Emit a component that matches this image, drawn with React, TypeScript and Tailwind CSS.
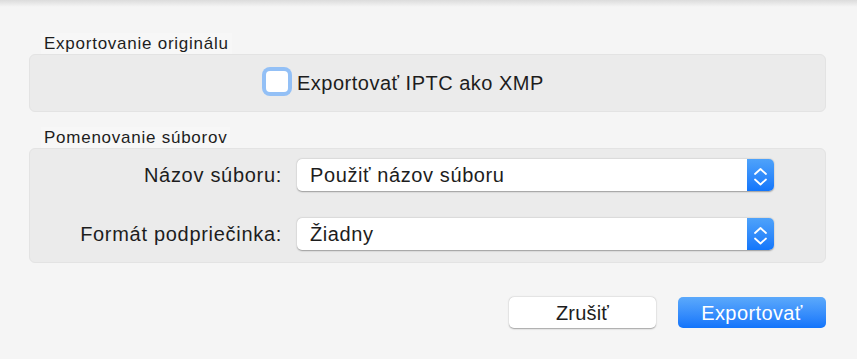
import React from "react";

function Stepper() {
  return (
    <div className="w-[27px] h-full rounded-r-[5px] bg-gradient-to-b from-[#4ea2fa] to-[#1276fb] flex items-center justify-center">
      <svg width="27" height="31" viewBox="0 0 27 31" fill="none">
        <polyline points="8,14 13.5,9 19,14" stroke="white" strokeWidth="1.8" strokeLinecap="round" strokeLinejoin="round" />
        <polyline points="8,19.5 13.5,24.5 19,19.5" stroke="white" strokeWidth="1.8" strokeLinecap="round" strokeLinejoin="round" />
      </svg>
    </div>
  );
}

function Popup({ value }: { value: string }) {
  return (
    <div className="w-[477px] h-[32px] flex rounded-[5px] bg-white shadow-[0_0.5px_1.5px_rgba(0,0,0,0.35)]">
      <div className="flex-1 pl-[13px] flex items-center text-[20px] tracking-[0.6px] text-[#1d1d1d]">{value}</div>
      <Stepper />
    </div>
  );
}

export default function App() {
  return (
    <div className="w-[857px] h-[359px] bg-[#f5f5f5] font-['Liberation_Sans',Arial,sans-serif] text-[#1d1d1d] overflow-hidden">
      <div className="h-[7px] bg-gradient-to-b from-[#dcdcdc] to-[#f5f5f5]" />
      <div className="pl-[29px] pr-[31px] pt-[26px]">
        <div className="ml-[12px] w-fit h-[21px] leading-[21px] text-[17px] tracking-[0.75px] px-[3px] bg-[#f7f7f7]">
          Exportovanie originálu
        </div>
        <div className="h-[58px] rounded-[6px] bg-[#ebebeb] border border-[#e3e3e3] flex items-center pl-[232px]">
          <div className="w-[30px] h-[29px] rounded-[8px] bg-[#93c0f6] p-[4px] mt-[-3px]">
            <div className="w-full h-full rounded-[4px] bg-white" />
          </div>
          <div className="ml-[5px] text-[20px] tracking-[0.5px]">Exportovať IPTC ako XMP</div>
        </div>
        <div className="mt-[15px] ml-[12px] w-fit h-[21px] leading-[21px] text-[17px] tracking-[0.75px] px-[3px] bg-[#f7f7f7]">
          Pomenovanie súborov
        </div>
        <div className="rounded-[6px] bg-[#ebebeb] border border-[#e3e3e3] pt-[10px] pb-[12px] flex flex-col gap-[27px]">
          <div className="flex items-center">
            <div className="w-[252px] text-right text-[20px] tracking-[0.7px]">Názov súboru:</div>
            <div className="ml-[15px]">
              <Popup value="Použiť názov súboru" />
            </div>
          </div>
          <div className="flex items-center">
            <div className="w-[252px] text-right text-[20px] tracking-[0.7px]">Formát podpriečinka:</div>
            <div className="ml-[15px]">
              <Popup value="Žiadny" />
            </div>
          </div>
        </div>
        <div className="mt-[34px] flex justify-end gap-[22px]">
          <div className="w-[147px] h-[31px] rounded-[5px] bg-white shadow-[0_0.5px_1.5px_rgba(0,0,0,0.35)] flex items-center justify-center text-[20px] tracking-[0.2px]">
            Zrušiť
          </div>
          <div className="w-[148px] h-[31px] rounded-[5px] bg-gradient-to-b from-[#5ba9fb] to-[#1174fb] flex items-center justify-center text-[20px] tracking-[0.4px] text-white">
            Exportovať
          </div>
        </div>
      </div>
    </div>
  );
}
